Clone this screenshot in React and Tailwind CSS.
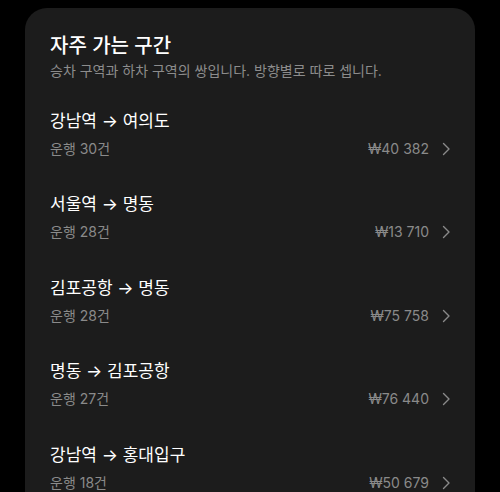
const routes = [
  { from: "강남역", to: "여의도", count: 30, price: "₩40 382" },
  { from: "서울역", to: "명동", count: 28, price: "₩13 710" },
  { from: "김포공항", to: "명동", count: 28, price: "₩75 758" },
  { from: "명동", to: "김포공항", count: 27, price: "₩76 440" },
  { from: "강남역", to: "홍대입구", count: 18, price: "₩50 679" },
];

function Chevron() {
  return (
    <svg width="10" height="14" viewBox="0 0 10 14" fill="none" className="text-[#8a8a8a]">
      <path d="M2.5 1.5 8 7l-5.5 5.5" stroke="currentColor" strokeWidth="1.4" strokeLinecap="round" strokeLinejoin="round" />
    </svg>
  );
}

export default function App() {
  return (
    <div
      className="h-[492px] w-[500px] bg-black pt-2 px-[25px] overflow-hidden"
      style={{ fontFamily: 'Inter, "Noto Sans CJK KR", "Noto Sans", sans-serif' }}
    >
      <div className="bg-[#1c1c1c] rounded-[22px] pl-[25px] pr-[24px] pt-[24px] pb-8 min-h-[520px]">
        <h2 className="text-[20px] leading-[28px] font-medium text-white">자주 가는 구간</h2>
        <p className="text-[14px] leading-[20px] text-[#8c8c8c] mt-[1px]">
          승차 구역과 하차 구역의 쌍입니다. 방향별로 따로 셉니다.
        </p>

        <div className="mt-[26px] flex flex-col">
          {routes.map((r) => (
            <div key={r.from + r.to} className="h-[83.4px] flex flex-col">
              <div className="text-[17px] leading-[28px] text-white">
                {r.from} → {r.to}
              </div>
              <div className="flex items-center justify-between mt-[1px]">
                <span className="text-[14px] leading-[26px] text-[#8a8a8a]">운행 {r.count}건</span>
                <span className="flex items-center gap-[12px] text-[14px] leading-[26px] text-[#8a8a8a]">
                  {r.price}
                  <Chevron />
                </span>
              </div>
            </div>
          ))}
        </div>
      </div>
    </div>
  );
}
